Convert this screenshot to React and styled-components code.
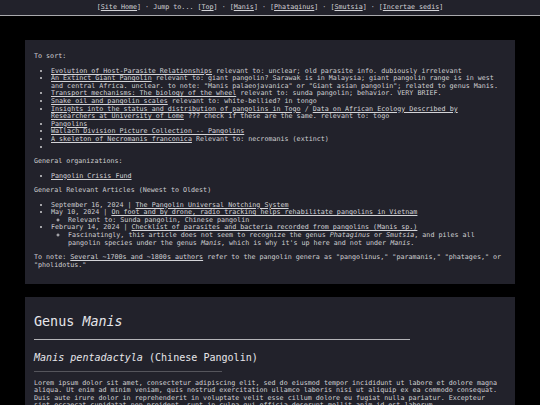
import React from 'react'
import styled, { createGlobalStyle } from 'styled-components'

const GlobalStyle = createGlobalStyle`
  html, body {
    margin: 0;
    padding: 0;
    background: #000;
    overflow: hidden;
  }
  body {
    font-family: "DejaVu Sans Mono", "Liberation Mono", monospace;
    font-size: 6.7px;
    line-height: 7.6px;
    color: #cfcfd2;
  }
`

const Nav = styled.nav`
  height: 15px;
  line-height: 15px;
  background: #22222b;
  border-bottom: 1.5px solid #a9a9ad;
  text-align: center;
  white-space: pre;
`

const Link = styled.a`
  color: #d4d4d8;
  text-decoration: underline;
  text-decoration-thickness: 1px;
  text-underline-offset: 1px;
`

const Page = styled.main`
  display: flex;
  flex-direction: column;
  align-items: center;
  gap: 12.5px;
  padding-top: 24px;
`

const Panel = styled.section`
  box-sizing: border-box;
  width: 490px;
  background: #22222b;
  padding: 6.3px 11px 8.3px 9px;
`

const Para = styled.p`
  margin: 6.9px 0;
`

const List = styled.ul`
  margin: 6.9px 0;
  padding-left: 17px;
  list-style: disc;
`

const SubList = styled.ul`
  margin: 0;
  padding-left: 17px;
  list-style: circle;
`

const Title = styled.h1`
  margin: 11.3px 0 0;
  font-size: 13.4px;
  line-height: 15.2px;
  font-weight: normal;
  color: #e6e6ea;
`

const SpeciesTitle = styled.h2`
  margin: 12.3px 0 0;
  font-size: 10.05px;
  line-height: 11.4px;
  font-weight: normal;
  color: #e6e6ea;
`

const Rule = styled.hr`
  margin: ${p => p.$top}px 0 0;
  width: ${p => p.$width};
  height: 0;
  border: 0;
  border-top: 1px solid ${p => p.$tone};
`

const Lorem = styled.p`
  margin: 7.7px 0 0;
`

const navItems = ['Top', 'Manis', 'Phataginus', 'Smutsia', 'Incertae sedis']

export default function App() {
  return (
    <>
      <GlobalStyle />
      <Nav>
        [<Link href="#">Site Home</Link>] · Jump to... {navItems.map((n, i) => (
          <React.Fragment key={n}>
            {i > 0 && ' · '}[<Link href="#">{n}</Link>]
          </React.Fragment>
        ))}
      </Nav>
      <Page>
        <Panel>
          <Para>To sort:</Para>
          <List>
            <li><Link href="#">Evolution of Host-Parasite Relationships</Link> relevant to: unclear; old parasite info. dubiously irrelevant</li>
            <li><Link href="#">An Extinct Giant Pangolin</Link> relevant to: giant pangolin? Sarawak is in Malaysia; giant pangolin range is in west and central Africa. unclear. to note: "Manis palaeojavanica" or "Giant asian pangolin"; related to genus Manis.</li>
            <li><Link href="#">Transport mechanisms: The biology of the wheel</Link> relevant to: sunda pangolin; behavior. VERY BRIEF.</li>
            <li><Link href="#">Snake oil and pangolin scales</Link> relevant to: white-bellied? in tongo</li>
            <li><Link href="#">Insights into the status and distribution of pangolins in Togo</Link> / <Link href="#">Data on African Ecology Described by Researchers at University of Lome</Link> ??? check if these are the same. relevant to: togo</li>
            <li><Link href="#">Pangolins</Link></li>
            <li><Link href="#">Wallach Division Picture Collection -- Pangolins</Link></li>
            <li><Link href="#">A skeleton of Necromanis franconica</Link> Relevant to: necromanis (extinct)</li>
            <li>{'\u00a0'}</li>
          </List>
          <Para>General organizations:</Para>
          <List>
            <li><Link href="#">Pangolin Crisis Fund</Link></li>
          </List>
          <Para>General Relevant Articles (Newest to Oldest)</Para>
          <List>
            <li>September 16, 2024 | <Link href="#">The Pangolin Universal Notching System</Link></li>
            <li>
              May 10, 2024 | <Link href="#">On foot and by drone, radio tracking helps rehabilitate pangolins in Vietnam</Link>
              <SubList>
                <li>Relevant to: Sunda pangolin, Chinese pangolin</li>
              </SubList>
            </li>
            <li>
              February 14, 2024 | <Link href="#">Checklist of parasites and bacteria recorded from pangolins (Manis sp.)</Link>
              <SubList>
                <li>Fascinatingly, this article does not seem to recognize the genus <em>Phataginus</em> or <em>Smutsia</em>, and piles all pangolin species under the genus <em>Manis</em>, which is why it's up here and not under <em>Manis</em>.</li>
              </SubList>
            </li>
          </List>
          <Para>To note: <Link href="#">Several ~1700s and ~1800s authors</Link> refer to the pangolin genera as "pangolinus," "paramanis," "phatages," or "pholidotus."</Para>
        </Panel>
        <Panel>
          <Title>Genus <em>Manis</em></Title>
          <Rule $top={9} $width="80%" $tone="#b4b4b8" />
          <SpeciesTitle><em>Manis pentadactyla</em> (Chinese Pangolin)</SpeciesTitle>
          <Rule $top={7.5} $width="40%" $tone="#55555c" />
          <Lorem>
            Lorem ipsum dolor sit amet, consectetur adipiscing elit, sed do eiusmod tempor incididunt ut labore et dolore magna aliqua. Ut enim ad minim veniam, quis nostrud exercitation ullamco laboris nisi ut aliquip ex ea commodo consequat. Duis aute irure dolor in reprehenderit in voluptate velit esse cillum dolore eu fugiat nulla pariatur. Excepteur sint occaecat cupidatat non proident, sunt in culpa qui officia deserunt mollit anim id est laborum.
          </Lorem>
        </Panel>
      </Page>
    </>
  )
}
